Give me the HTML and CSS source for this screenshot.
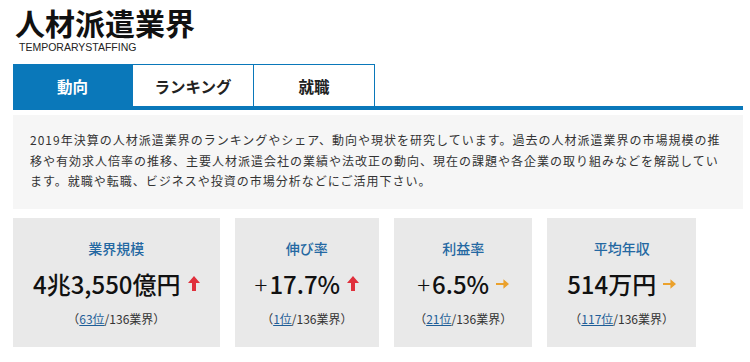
FILE: index.html
```html
<!DOCTYPE html>
<html lang="ja">
<head>
  <meta charset="UTF-8">
  <title>人材派遣業界</title>
  <link rel="stylesheet" href="styles.css">
</head>
<body>
  <header class="page-head">
    <h1>人材派遣業界</h1>
    <div class="sub">TEMPORARYSTAFFING</div>
  </header>

  <nav class="tabs">
    <a class="tab active" href="#">動向</a>
    <a class="tab" href="#">ランキング</a>
    <a class="tab" href="#">就職</a>
  </nav>

  <p class="intro">2019年決算の人材派遣業界のランキングやシェア、動向や現状を研究しています。過去の人材派遣業界の市場規模の推移や有効求人倍率の推移、主要人材派遣会社の業績や法改正の動向、現在の課題や各企業の取り組みなどを解説しています。就職や転職、ビジネスや投資の市場分析などにご活用下さい。</p>

  <div class="stats">
    <div class="stat">
      <div class="label">業界規模</div>
      <div class="value">4兆3,550億円<svg class="arrow up" viewBox="0 0 12 15"><path d="M6 0 L12 7 L8 7 L8 15 L4 15 L4 7 L0 7 Z"/></svg></div>
      <div class="rank">（<a href="#">63位</a>/136業界）</div>
    </div>
    <div class="stat">
      <div class="label">伸び率</div>
      <div class="value"><span class="sign">+</span>17.7%<svg class="arrow up" viewBox="0 0 12 15"><path d="M6 0 L12 7 L8 7 L8 15 L4 15 L4 7 L0 7 Z"/></svg></div>
      <div class="rank">（<a href="#">1位</a>/136業界）</div>
    </div>
    <div class="stat">
      <div class="label">利益率</div>
      <div class="value"><span class="sign">+</span>6.5%<svg class="arrow right" viewBox="0 0 14 10"><path d="M0 4 L8 4 L8 0 L14 5 L8 10 L8 6 L0 6 Z"/></svg></div>
      <div class="rank">（<a href="#">21位</a>/136業界）</div>
    </div>
    <div class="stat">
      <div class="label">平均年収</div>
      <div class="value">514万円<svg class="arrow right" viewBox="0 0 14 10"><path d="M0 4 L8 4 L8 0 L14 5 L8 10 L8 6 L0 6 Z"/></svg></div>
      <div class="rank">（<a href="#">117位</a>/136業界）</div>
    </div>
  </div>
</body>
</html>
```

FILE: styles.css
```css
* {
  margin: 0;
  padding: 0;
  box-sizing: border-box;
}
body {
  font-family: "Noto Sans CJK JP", "Noto Sans", sans-serif;
  color: #222;
  background: #fff;
  padding: 0 7px 0 13px;
}
.page-head {
  padding: 4px 0 0 2px;
}
.page-head h1 {
  font-size: 30px;
  font-weight: 700;
  line-height: 36px;
  color: #111;
}
.page-head .sub {
  font-family: "Liberation Sans", sans-serif;
  font-size: 10.5px;
  line-height: 12px;
  padding-left: 4px;
  color: #222;
  margin-top: 1px;
}
.tabs {
  display: flex;
  margin-top: 11px;
  border-bottom: 4px solid #0a78ba;
}
.tab {
  width: 121px;
  height: 42px;
  display: flex;
  align-items: center;
  justify-content: center;
  border: 1px solid #0a78ba;
  border-bottom: none;
  border-left: none;
  font-size: 15.5px;
  font-weight: 700;
  color: #222;
  text-decoration: none;
}
.tab.active {
  width: 120px;
  background: #0a78ba;
  color: #fff;
}
.intro {
  margin-top: 5px;
  background: #f6f6f6;
  padding: 15px 17px 17px;
  font-size: 12px;
  line-height: 20.5px;
  letter-spacing: 1px;
  color: #333;
}
.stats {
  display: flex;
  gap: 15px;
  margin-top: 9px;
}
.stat {
  background: #e9e9e9;
  padding: 20px 20px 19px;
  text-align: center;
}
.label {
  font-size: 14px;
  line-height: 20px;
  font-weight: 500;
  color: #2468a2;
}
.value {
  margin-top: 10px;
  font-size: 24px;
  line-height: 32px;
  font-weight: 500;
  color: #111;
  white-space: nowrap;
  display: flex;
  align-items: center;
  justify-content: center;
}
.sign {
  font-weight: 300;
  margin-right: 2px;
}
.arrow {
  margin-left: 7px;
}
.arrow.up {
  width: 12px;
  height: 15px;
  fill: #e0303c;
}
.arrow.right {
  width: 13px;
  height: 10px;
  fill: #eba12c;
}
.rank {
  margin-top: 10px;
  font-size: 12px;
  line-height: 18px;
  color: #333;
}
.rank a {
  color: #1e5e98;
}
```
